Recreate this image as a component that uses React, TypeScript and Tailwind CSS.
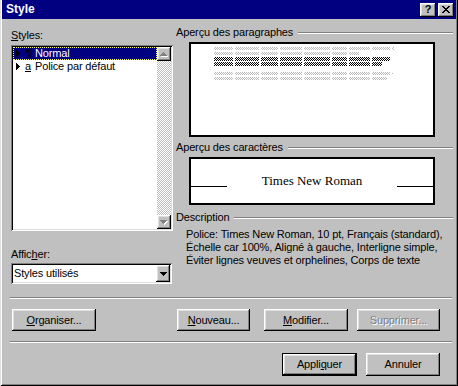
import React from "react";

const raised =
  "shadow-[inset_-1px_-1px_#000,inset_1px_1px_#fff,inset_-2px_-2px_#808080,inset_2px_2px_#dfdfdf]";
const sunken =
  "shadow-[inset_1px_1px_#808080,inset_-1px_-1px_#fff,inset_2px_2px_#000,inset_-2px_-2px_#dfdfdf]";

// word-ish segment widths for the paragraph preview
const words = [19, 24, 17, 22, 26, 15, 21, 18, 25, 16, 23, 20];

function PreviewLine({ width, dark }: { width: number; dark?: boolean }) {
  const segs: number[] = [];
  let left = width;
  let i = 0;
  while (left > 0) {
    const w = Math.min(words[i % words.length], left);
    segs.push(w);
    left -= w + 2;
    i++;
  }
  return (
    <div className={`flex gap-[2px] ${dark ? "h-[4px]" : "h-[3px]"}`}>
      {segs.map((w, k) => (
        <div
          key={k}
          style={{ width: w }}
          className={
            dark
              ? "h-full bg-[image:repeating-conic-gradient(#000_0%_25%,#fff_0%_50%)] bg-[length:2px_2px]"
              : "h-full bg-[image:repeating-conic-gradient(#b8b8b8_0%_25%,#fff_0%_50%)] bg-[length:2px_2px]"
          }
        />
      ))}
    </div>
  );
}

function GroupHeader({ label }: { label: string }) {
  return (
    <div className="flex items-center h-[13px]">
      <span>{label}</span>
      <div className="flex-1 ml-[5px] h-[2px] border-t border-t-[#808080] border-b border-b-white" />
    </div>
  );
}

function Button({
  children,
  className,
  disabled,
}: {
  children: React.ReactNode;
  className?: string;
  disabled?: boolean;
}) {
  return (
    <div
      className={`flex items-center justify-center bg-[#c0c0c0] ${raised} ${className ?? ""} ${
        disabled ? "text-[#808080] [text-shadow:1px_1px_#fff]" : ""
      }`}
    >
      {children}
    </div>
  );
}

function RowArrow() {
  return (
    <svg width="4" height="7" viewBox="0 0 4 7" shapeRendering="crispEdges">
      <path d="M0 0h1v7H0z M1 1h1v5H1z M2 2h1v3H2z M3 3h1v1H3z" fill="#000" />
    </svg>
  );
}

function ScrollArrow({ up }: { up?: boolean }) {
  return (
    <div className={`w-[14px] h-[14px] flex items-center justify-center bg-[#c0c0c0] ${raised}`}>
      <svg width="8" height="5" viewBox="0 0 8 5" shapeRendering="crispEdges">
        {up ? (
          <>
            <path d="M4 1h1v1h1v1h1v1h1v1H1V4h1V3h1V2h1z" fill="#fff" />
            <path d="M3 0h1v1h1v1h1v1h1v1H0V3h1V2h1V1h1z" fill="#808080" />
          </>
        ) : (
          <>
            <path d="M1 1h7v1H7v1H6v1H5v1H4V4H3V3H2V2H1z" fill="#fff" />
            <path d="M0 0h7v1H6v1H5v1H4v1H3V3H2V2H1V1H0z" fill="#808080" />
          </>
        )}
      </svg>
    </div>
  );
}

export default function App() {
  return (
    <div className="w-[458px] h-[386px] bg-[#c0c0c0] flex flex-col text-[11px] leading-[13px] tracking-[-0.15px] text-black font-['Liberation_Sans',Arial,sans-serif] shadow-[inset_1px_0_#dfdfdf,inset_-1px_-1px_#000,inset_2px_0_#fff,inset_-2px_-2px_#808080]">
      {/* Title bar */}
      <div className="mx-[2px] h-[19px] bg-[#000080] flex items-center pl-[4px] pr-[2px]">
        <span className="text-white font-bold text-[12px] tracking-normal">Style</span>
        <div className={`ml-auto w-[16px] h-[14px] flex items-center justify-center bg-[#c0c0c0] ${raised}`}>
          <span className="font-bold text-[11px] leading-none">?</span>
        </div>
        <div className={`ml-[2px] w-[16px] h-[14px] flex items-center justify-center bg-[#c0c0c0] ${raised}`}>
          <svg width="8" height="7" viewBox="0 0 8 7" shapeRendering="crispEdges">
            <path
              d="M0 0h2v1H0z M6 0h2v1H6z M1 1h2v1H1z M5 1h2v1H5z M2 2h4v1H2z M3 3h2v1H3z M2 4h4v1H2z M1 5h2v1H1z M5 5h2v1H5z M0 6h2v1H0z M6 6h2v1H6z"
              fill="#000"
            />
          </svg>
        </div>
      </div>

      {/* Main area */}
      <div className="flex pl-[11px]">
        {/* Left column */}
        <div className="w-[162px] mt-[10px] flex flex-col">
          <div>
            <span className="underline">S</span>tyles:
          </div>
          <div className={`mt-[3px] h-[186px] bg-white p-[2px] flex ${sunken}`}>
            <div className="flex-1 flex flex-col">
              <div className="h-[13px] bg-[#000080] border border-dotted border-[#ffff80] flex items-center">
                <div className="w-[12px] pl-[2px] flex items-center">
                  <RowArrow />
                </div>
                <span className="w-[9px] leading-[11px]">¶</span>
                <span className="text-white leading-[11px]">Normal</span>
              </div>
              <div className="h-[13px] flex items-center">
                <div className="w-[12px] pl-[3px] flex items-center">
                  <RowArrow />
                </div>
                <span className="w-[10px] underline">a</span>
                <span>Police par défaut</span>
              </div>
            </div>
            <div className="w-[14px] flex flex-col bg-[image:repeating-conic-gradient(#c0c0c0_0%_25%,#fff_0%_50%)] bg-[length:2px_2px]">
              <ScrollArrow up />
              <div className="flex-1" />
              <ScrollArrow />
            </div>
          </div>
          <div className="mt-[17px]">
            Affic<span className="underline">h</span>er:
          </div>
          <div className={`mt-[2px] h-[21px] w-[161px] bg-white p-[2px] flex items-center ${sunken}`}>
            <span className="flex-1 pl-[1px]">Styles utilisés</span>
            <div className={`w-[14px] h-[17px] flex items-center justify-center bg-[#c0c0c0] ${raised}`}>
              <svg width="7" height="4" viewBox="0 0 7 4" shapeRendering="crispEdges">
                <path d="M0 0h7v1H6v1H5v1H4v1H3V3H2V2H1V1H0z" fill="#000" />
              </svg>
            </div>
          </div>
        </div>

        {/* Right column */}
        <div className="ml-[3px] w-[277px] mt-[7px] flex flex-col">
          <GroupHeader label="Aperçu des paragraphes" />
          <div className="mt-[3px] ml-[13px] w-[246px] h-[95px] bg-white border-2 border-black pl-[23px] pt-[3px] flex flex-col">
            <PreviewLine width={180} />
            <div className="mt-[2px]">
              <PreviewLine width={145} />
            </div>
            <div className="mt-[2px]">
              <PreviewLine width={178} dark />
            </div>
            <div className="mt-[1px]">
              <PreviewLine width={168} dark />
            </div>
            <div className="mt-[6px]">
              <PreviewLine width={179} />
            </div>
            <div className="mt-[2px]">
              <PreviewLine width={173} />
            </div>
          </div>

          <div className="mt-[4px]">
            <GroupHeader label="Aperçu des caractères" />
          </div>
          <div className="mt-[3px] ml-[13px] w-[246px] h-[48px] bg-white border-2 border-black pt-[14px]">
            <div className="flex items-end h-[16px]">
              <div className="w-[36px] h-px bg-black mb-[2px]" />
              <span className="flex-1 text-center text-[13px] leading-[16px] tracking-normal font-['Liberation_Serif','Times_New_Roman',serif]">
                Times New Roman
              </span>
              <div className="w-[36px] h-px bg-black mb-[2px]" />
            </div>
          </div>

          <div className="mt-[6px]">
            <GroupHeader label="Description" />
          </div>
          <div className="mt-[4px] ml-[10px] flex flex-col">
            <div>Police: Times New Roman, 10 pt, Français (standard),</div>
            <div>Échelle car 100%, Aligné à gauche, Interligne simple,</div>
            <div>Éviter lignes veuves et orphelines, Corps de texte</div>
          </div>
        </div>
      </div>

      {/* Separator */}
      <div className="mt-[13px] ml-[10px] w-[442px] h-[2px] border-t border-t-[#808080] border-b border-b-white" />

      {/* Style actions */}
      <div className="mt-[10px] flex h-[22px]">
        <Button className="ml-[12px] w-[84px] h-[22px]">
          <span>
            <span className="underline">O</span>rganiser...
          </span>
        </Button>
        <Button className="ml-[81px] w-[73px] h-[22px]">
          <span>
            <span className="underline">N</span>ouveau...
          </span>
        </Button>
        <Button className="ml-[14px] w-[84px] h-[22px]">
          <span>
            <span className="underline">M</span>odifier...
          </span>
        </Button>
        <Button className="ml-[9px] w-[83px] h-[22px]" disabled>
          <span>Supprimer...</span>
        </Button>
      </div>

      {/* Separator */}
      <div className="mt-[10px] ml-[10px] w-[442px] h-[2px] border-t border-t-[#808080] border-b border-b-white" />

      {/* Dialog buttons */}
      <div className="mt-[10px] flex">
        <div className="ml-[282px] w-[75px] h-[23px] border border-black flex">
          <Button className="flex-1">
            <span>
              Appli<span className="underline">q</span>uer
            </span>
          </Button>
        </div>
        <Button className="ml-[9px] w-[74px] h-[23px]">
          <span>Annuler</span>
        </Button>
      </div>
    </div>
  );
}
